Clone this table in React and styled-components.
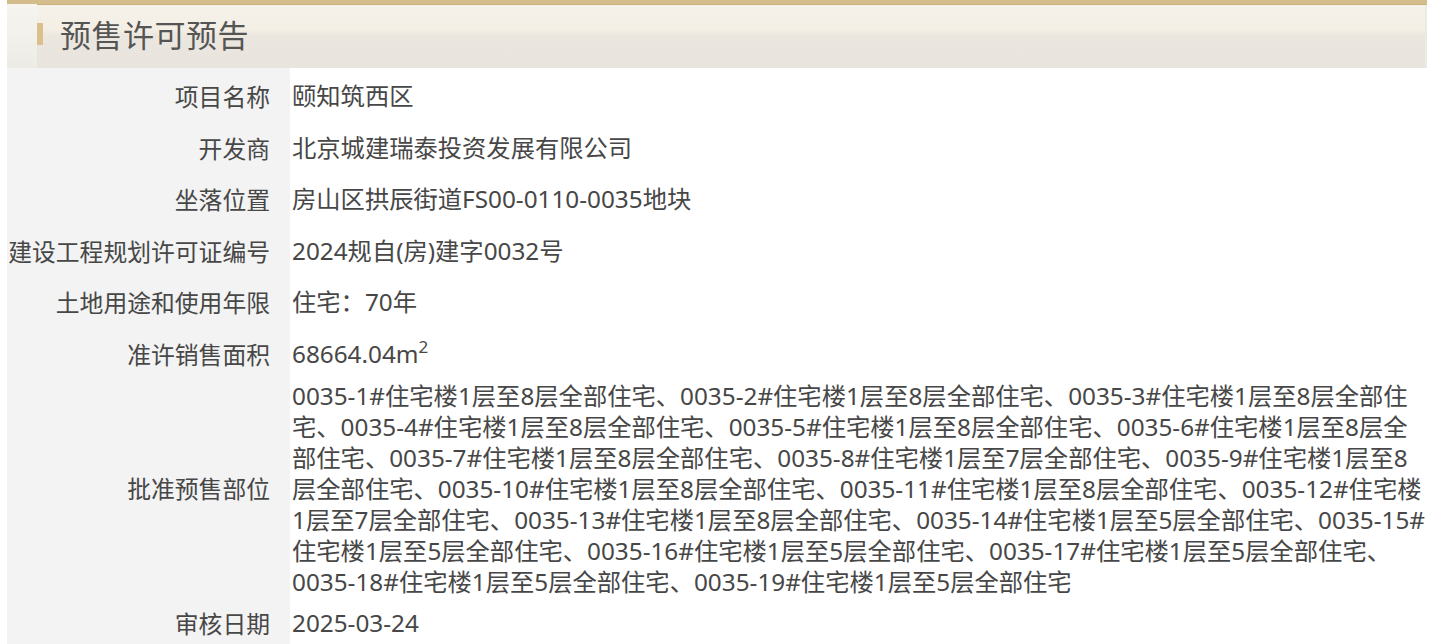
import React from 'react'
import styled, { createGlobalStyle } from 'styled-components'

const GlobalStyle = createGlobalStyle`
  html, body {
    margin: 0;
    padding: 0;
    background: #ffffff;
  }
  body {
    font-family: "Noto Sans", "Noto Sans CJK SC", sans-serif;
    color: #474747;
  }
`;

const Page = styled.div`
  width: 1420px;
  margin-left: 7px;
`;

const Header = styled.div`
  display: flex;
  align-items: center;
  height: 64px;
  border-top: 4px solid #d5bd8b;
  background: linear-gradient(to bottom, #f6f2ea 0%, #f4efe5 40%, #ebe6de 50%, #e8e4de 100%);
  box-shadow: inset 0 1px 0 #c9b07c, inset -2px 0 0 #eceae2;
`;

const HeaderCap = styled.div`
  align-self: stretch;
  width: 30px;
  background: linear-gradient(to bottom, #f6f4ef 0%, #f3f1ec 50%, #ecebe6 100%);
`;

const GoldBar = styled.span`
  display: block;
  width: 6px;
  height: 22px;
  margin-top: -4px;
  background: #d9c08d;
`;

const Title = styled.h2`
  margin: 0 0 0 17px;
  padding-bottom: 6px;
  font-family: "Noto Sans CJK SC", sans-serif;
  font-size: 31px;
  font-weight: normal;
  color: #555555;
  letter-spacing: 0.5px;
`;

const Table = styled.div`
  display: grid;
  grid-template-columns: 283px 1fr;
`;

const Label = styled.div`
  display: flex;
  align-items: center;
  justify-content: flex-end;
  padding: ${p => (p.$first ? '14px' : '12px')} 20px 12px 0;
  background: #f3f3f3;
  font-family: "Noto Sans CJK SC", sans-serif;
  font-size: 23.8px;
  line-height: 27.6px;
  color: #474747;
  white-space: nowrap;
`;

const Value = styled.div`
  padding: ${p => (p.$multi ? '0' : p.$first ? '14px 0 12px' : '12px 0')};
  padding-left: 2px;
  font-size: 24.3px;
  line-height: ${p => (p.$multi ? '31px' : '27.6px')};
  color: #474747;

  sup {
    font-size: 17px;
    line-height: 0;
    vertical-align: 10px;
  }
`;

const parts = [
  '0035-1#住宅楼1层至8层全部住宅',
  '0035-2#住宅楼1层至8层全部住宅',
  '0035-3#住宅楼1层至8层全部住宅',
  '0035-4#住宅楼1层至8层全部住宅',
  '0035-5#住宅楼1层至8层全部住宅',
  '0035-6#住宅楼1层至8层全部住宅',
  '0035-7#住宅楼1层至8层全部住宅',
  '0035-8#住宅楼1层至7层全部住宅',
  '0035-9#住宅楼1层至8层全部住宅',
  '0035-10#住宅楼1层至8层全部住宅',
  '0035-11#住宅楼1层至8层全部住宅',
  '0035-12#住宅楼1层至7层全部住宅',
  '0035-13#住宅楼1层至8层全部住宅',
  '0035-14#住宅楼1层至5层全部住宅',
  '0035-15#住宅楼1层至5层全部住宅',
  '0035-16#住宅楼1层至5层全部住宅',
  '0035-17#住宅楼1层至5层全部住宅',
  '0035-18#住宅楼1层至5层全部住宅',
  '0035-19#住宅楼1层至5层全部住宅',
];

const rows = [
  { label: '项目名称', value: '颐知筑西区' },
  { label: '开发商', value: '北京城建瑞泰投资发展有限公司' },
  { label: '坐落位置', value: '房山区拱辰街道FS00-0110-0035地块' },
  { label: '建设工程规划许可证编号', value: '2024规自(房)建字0032号' },
  { label: '土地用途和使用年限', value: '住宅：70年' },
  { label: '准许销售面积', value: <>68664.04m<sup>2</sup></> },
  { label: '批准预售部位', value: parts.join('、'), multi: true },
  { label: '审核日期', value: '2025-03-24' },
];

export default function App() {
  return (
    <Page>
      <GlobalStyle />
      <Header>
        <HeaderCap />
        <GoldBar />
        <Title>预售许可预告</Title>
      </Header>
      <Table>
        {rows.map((r, i) => (
          <React.Fragment key={i}>
            <Label $first={i === 0}>{r.label}</Label>
            <Value $first={i === 0} $multi={r.multi}>{r.value}</Value>
          </React.Fragment>
        ))}
      </Table>
    </Page>
  )
}
